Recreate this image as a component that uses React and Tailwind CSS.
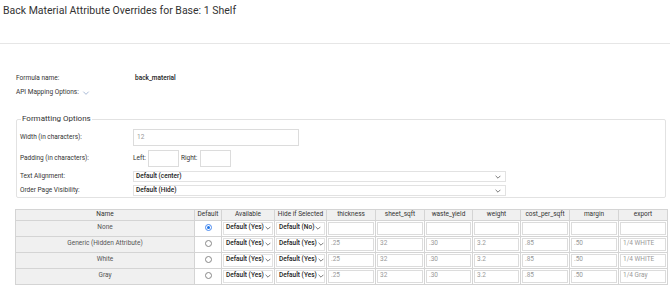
import React from 'react';

const rows = [
  { name: 'None', checked: true, hide: 'Default (No)', vals: ['', '', '', '', '', '', ''] },
  { name: 'Generic (Hidden Attribute)', hide: 'Default (Yes)', vals: ['.25', '32', '.30', '3.2', '.85', '.50', '1/4 WHITE'] },
  { name: 'White', hide: 'Default (Yes)', vals: ['.25', '32', '.30', '3.2', '.85', '.50', '1/4 WHITE'] },
  { name: 'Gray', hide: 'Default (Yes)', vals: ['.25', '32', '.30', '3.2', '.85', '.50', '1/4 Gray'] },
];

const cols = ['thickness', 'sheet_sqft', 'waste_yield', 'weight', 'cost_per_sqft', 'margin', 'export'];
const colW = ['w-[49px]', 'w-[49px]', 'w-[48px]', 'w-[48px]', 'w-[49px]', 'w-[49px]', 'w-[49px]'];

function Chevron({ className = '' }) {
  return (
    <svg viewBox="0 0 10 6" className={className} fill="none" stroke="currentColor" strokeWidth="1.3">
      <path d="M1 1l4 4 4-4" />
    </svg>
  );
}

function MiniSelect({ value }) {
  return (
    <div className="flex h-[13px] items-center gap-[1px] overflow-hidden whitespace-nowrap border border-[#e2e2e2] pl-[2px] text-[6.5px] font-medium text-[#222]">
      <span>{value}</span>
      <Chevron className="h-[4px] w-[6px] shrink-0 text-[#555]" />
    </div>
  );
}

export default function App() {
  return (
    <div className="h-[285px] w-[670px] overflow-hidden bg-white text-[#333]" style={{ fontFamily: 'Roboto, "Liberation Sans", sans-serif' }}>
      <div className="h-[44px] border-b border-[#e6e6e6] px-[3px] pt-[3px] text-[10.5px] text-[#333]">
        Back Material Attribute Overrides for Base: 1 Shelf
      </div>

      <div className="pl-[16px] pt-[30px] text-[6.5px] text-[#333]">
        <div className="flex h-[10px] items-center">
          <span className="w-[119px]">Formula name:</span>
          <span className="font-medium text-[#222]">back_material</span>
        </div>
        <div className="mt-[4px] flex h-[10px] items-center gap-[3px]">
          <span>API Mapping Options:</span>
          <Chevron className="h-[4px] w-[8px] text-[#9aaed0]" />
        </div>
      </div>

      <fieldset className="mx-[16px] mt-[15px] h-[85px] w-[650px] rounded-[2px] border border-[#e2e2e2] pl-[3px] pr-0">
        <legend className="ml-[1px] px-[1px] text-[8px] text-[#333]">Formatting Options</legend>
        <div className="text-[6.5px] text-[#333]">
          <div className="mt-[4px] flex items-center">
            <span className="w-[113px]">Width (in characters):</span>
            <div className="flex h-[17px] w-[166px] items-center border border-[#dcdcdc] px-[3px] text-[#999]">12</div>
          </div>
          <div className="mt-[4px] flex items-center">
            <span className="w-[113px]">Padding (in characters):</span>
            <span className="mr-[2px]">Left:</span>
            <div className="h-[17px] w-[31px] border border-[#dcdcdc]" />
            <span className="ml-[2px] mr-[3px]">Right:</span>
            <div className="h-[17px] w-[31px] border border-[#dcdcdc]" />
          </div>
          <div className="mt-[4px] flex items-center">
            <span className="w-[113px]">Text Alignment:</span>
            <div className="flex h-[11px] w-[373px] items-center justify-between border border-[#e2e2e2] pl-[2px] pr-[4px] font-medium text-[#222]">
              <span>Default (center)</span>
              <Chevron className="h-[4px] w-[6px] text-[#555]" />
            </div>
          </div>
          <div className="mt-[3px] flex items-center">
            <span className="w-[113px]">Order Page Visibility:</span>
            <div className="flex h-[11px] w-[373px] items-center justify-between border border-[#e2e2e2] pl-[2px] pr-[4px] font-medium text-[#222]">
              <span>Default (Hide)</span>
              <Chevron className="h-[4px] w-[6px] text-[#555]" />
            </div>
          </div>
        </div>
      </fieldset>

      <table className="ml-[15px] mt-[11px] w-[652px] table-fixed border-collapse border border-[#cfcfcf] text-[6.5px] text-[#333] shadow-[0_1px_0_#bbb]">
        <thead>
          <tr className="h-[10px] bg-[#f0f0f0]">
            <th className="w-[179px] border border-[#d4d4d4] font-normal">Name</th>
            <th className="w-[27px] border border-[#d4d4d4] font-normal">Default</th>
            <th className="w-[53px] border border-[#d4d4d4] font-normal">Available</th>
            <th className="w-[52px] border border-[#d4d4d4] font-normal">Hide if Selected</th>
            {cols.map((c, i) => (
              <th key={c} className={`${colW[i]} border border-[#d4d4d4] font-normal`}>{c}</th>
            ))}
          </tr>
        </thead>
        <tbody>
          {rows.map((r) => (
            <tr key={r.name} className="h-[16px]">
              <td className="border border-[#d4d4d4] bg-[#f0f0f0] text-center text-[#555]">{r.name}</td>
              <td className="border border-[#d4d4d4] text-center">
                {r.checked ? (
                  <span className="inline-block h-[7px] w-[7px] rounded-full border border-[#4a8af0] bg-white p-[1px] align-middle">
                    <span className="block h-full w-full rounded-full bg-[#1a73e8]" />
                  </span>
                ) : (
                  <span className="inline-block h-[7px] w-[7px] rounded-full border border-[#888] bg-white align-middle" />
                )}
              </td>
              <td className="border border-[#d4d4d4] px-[1px]">
                <MiniSelect value="Default (Yes)" />
              </td>
              <td className="border border-[#d4d4d4] px-[1px]">
                <MiniSelect value={r.hide} />
              </td>
              {r.vals.map((v, i) => (
                <td key={i} className="border border-[#d4d4d4] px-[1px]">
                  <div className="flex h-[13px] items-center border border-[#dcdcdc] px-[2px] text-[#999]">{v}</div>
                </td>
              ))}
            </tr>
          ))}
        </tbody>
      </table>
    </div>
  );
}
